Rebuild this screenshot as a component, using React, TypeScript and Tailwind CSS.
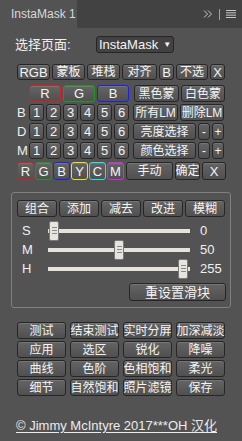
import type { ReactNode } from "react";

const font = "font-['Liberation_Sans','Noto_Sans_CJK_SC',sans-serif]";

function Btn({ children, className = "", ring = "border-[#262626]" }: { children: ReactNode; className?: string; ring?: string }) {
  return (
    <div
      className={`flex items-center justify-center rounded-[3px] border ${ring} bg-linear-to-b from-[#646464] to-[#505050] text-[#f4f4f4] text-[12px] leading-none shadow-[inset_0_1px_0_rgba(255,255,255,0.12)] whitespace-nowrap ${className}`}
    >
      {children}
    </div>
  );
}

function NumRow({ label, right }: { label: string; right: ReactNode }) {
  return (
    <div className="flex h-[17px] mt-[2px]">
      <div className="w-[12px] flex items-center text-[13px] text-[#f0f0f0]">{label}</div>
      <div className="w-[100px] flex justify-between">
        {[1, 2, 3, 4, 5, 6].map((n) => (
          <Btn key={n} className="w-[15px] text-[13px]">{n}</Btn>
        ))}
      </div>
      <div className="ml-[4px] flex gap-[2px]">{right}</div>
    </div>
  );
}

function Slider({ label, value, left }: { label: string; value: string; left: number }) {
  return (
    <div className="flex h-[19px] items-center">
      <div className="w-[31px] pl-[5px] text-[13px] text-[#f0f0f0]">{label}</div>
      <div className="relative w-[142px] h-[4px] bg-[#e6e2dc]">
        <div
          className="absolute top-[-8px] w-[10px] h-[20px] rounded-[2px] border border-[#7a7a7a] bg-[#e8e5e0] flex flex-col items-center justify-center gap-[2px]"
          style={{ left }}
        >
          <div className="w-[5px] h-px bg-[#8a8a8a]" />
          <div className="w-[5px] h-px bg-[#8a8a8a]" />
          <div className="w-[5px] h-px bg-[#8a8a8a]" />
        </div>
      </div>
      <div className="ml-[10px] text-[13px] text-[#f0f0f0]">{value}</div>
    </div>
  );
}

export default function App() {
  const colors: [string, string][] = [
    ["R", "border-[#e01b1b]"],
    ["G", "border-[#1c9a1c]"],
    ["B", "border-[#1f1fe6]"],
    ["Y", "border-[#e6e61e]"],
    ["C", "border-[#1ee6e6]"],
    ["M", "border-[#e61ee6]"],
  ];
  const grid = [
    "测试", "结束测试", "实时分屏", "加深减淡",
    "应用", "选区", "锐化", "降噪",
    "曲线", "色阶", "色相饱和", "柔光",
    "细节", "自然饱和", "照片滤镜", "保存",
  ];
  return (
    <div className={`w-[242px] h-[441px] bg-[#535353] flex flex-col overflow-hidden ${font}`}>
      {/* tab bar */}
      <div className="h-[28px] bg-[#424242] flex shrink-0">
        <div className="w-[77px] bg-[#535353] pl-[11px] flex items-center text-[12px] text-[#d8d8d8] whitespace-nowrap">InstaMask 1</div>
        <div className="flex-1" />
        <div className="flex items-center gap-[6px] pr-[6px] text-[#c8c8c8]">
          <svg width="10" height="8" viewBox="0 0 10 8" fill="none" stroke="currentColor" strokeWidth="1">
            <path d="M1 0.5 L4.5 4 L1 7.5 M5 0.5 L8.5 4 L5 7.5" />
          </svg>
          <div className="w-px h-[11px] bg-[#a0a0a0]" />
          <svg width="10" height="8" viewBox="0 0 10 8" fill="currentColor">
            <rect x="0" y="0" width="10" height="1" />
            <rect x="0" y="2.33" width="10" height="1" />
            <rect x="0" y="4.66" width="10" height="1" />
            <rect x="0" y="7" width="10" height="1" />
          </svg>
        </div>
      </div>

      {/* page select */}
      <div className="flex items-center h-[17px] mt-[8px] pl-[15px]">
        <div className="w-[81px] text-[13px] text-[#f0f0f0]">选择页面:</div>
        <div className="w-[78px] h-[17px] rounded-[3px] border border-[#262626] bg-[#424242] flex items-center justify-center gap-[5px] text-[13px] text-[#f4f4f4]">
          InstaMask <span className="text-[8px]">▼</span>
        </div>
      </div>

      <div className="pl-[17px] flex flex-col">
        {/* row 1 */}
        <div className="flex gap-[2px] h-[16px] mt-[11px]">
          <Btn className="w-[33px] text-[13px]">RGB</Btn>
          <Btn className="w-[33px]">蒙板</Btn>
          <Btn className="w-[33px]">堆栈</Btn>
          <Btn className="w-[35px]">对齐</Btn>
          <Btn className="w-[15px] text-[13px]">B</Btn>
          <Btn className="w-[32px]">不选</Btn>
          <Btn className="w-[15px] text-[13px]">X</Btn>
        </div>

        {/* row 2 */}
        <div className="flex h-[17px] mt-[5px] pl-[12px]">
          <div className="flex gap-[2px]">
            <Btn className="w-[32px] text-[13px]" ring="border-[#e01b1b]">R</Btn>
            <Btn className="w-[32px] text-[13px]" ring="border-[#1c9a1c]">G</Btn>
            <Btn className="w-[32px] text-[13px]" ring="border-[#1f1fe6]">B</Btn>
          </div>
          <div className="ml-[5px] flex gap-[2px]">
            <Btn className="w-[45px]">黑色蒙</Btn>
            <Btn className="w-[44px]">白色蒙</Btn>
          </div>
        </div>

        <NumRow
          label="B"
          right={
            <>
              <Btn className="w-[45px]">所有LM</Btn>
              <Btn className="w-[44px]">删除LM</Btn>
            </>
          }
        />
        <NumRow
          label="D"
          right={
            <>
              <Btn className="w-[63px]">亮度选择</Btn>
              <Btn className="w-[12px]">-</Btn>
              <Btn className="w-[12px]">+</Btn>
            </>
          }
        />
        <NumRow
          label="M"
          right={
            <>
              <Btn className="w-[63px]">颜色选择</Btn>
              <Btn className="w-[12px]">-</Btn>
              <Btn className="w-[12px]">+</Btn>
            </>
          }
        />

        {/* RGBYCM row */}
        <div className="flex h-[18px] mt-[3px]">
          <div className="flex gap-[1px]">
            {colors.map(([c, b]) => (
              <Btn key={c} className="w-[17px] text-[13px]" ring={b}>{c}</Btn>
            ))}
          </div>
          <div className="ml-[2px] flex gap-[2px]">
            <Btn className="w-[47px]">手动</Btn>
            <Btn className="w-[25px]">确定</Btn>
            <Btn className="w-[24px] text-[13px]">X</Btn>
          </div>
        </div>
      </div>

      {/* group box */}
      <div className="ml-[11px] w-[220px] mt-[12px] h-[116px] border border-[#808080] rounded-[3px] pl-[5px] pt-[7px]">
        <div className="flex gap-[2px] h-[17px]">
          {["组合", "添加", "减去", "改进", "模糊"].map((t) => (
            <Btn key={t} className="w-[40px]">{t}</Btn>
          ))}
        </div>
        <div className="mt-[4px] flex flex-col">
          <Slider label="S" value="0" left={1} />
          <Slider label="M" value="50" left={66} />
          <Slider label="H" value="255" left={130} />
        </div>
        <div className="flex justify-end pr-[4px] mt-[5px]">
          <Btn className="w-[97px] h-[18px] text-[13px]">重设置滑块</Btn>
        </div>
      </div>

      {/* bottom grid */}
      <div className="ml-[17px] w-[208px] mt-[14px] grid grid-cols-4 gap-x-[4px] gap-y-[2px]">
        {grid.map((t) => (
          <Btn key={t} className="h-[17px]">{t}</Btn>
        ))}
      </div>

      <div className="mt-[20px] pl-[16px] text-[13px] text-[#ececec] underline underline-offset-2">
        © Jimmy McIntyre 2017***OH 汉化
      </div>
    </div>
  );
}
